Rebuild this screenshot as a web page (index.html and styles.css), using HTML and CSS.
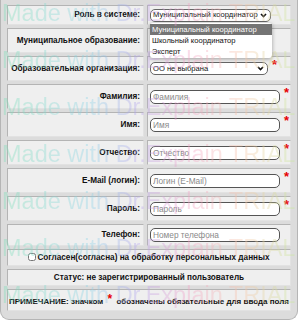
FILE: index.html
```html
<!DOCTYPE html>
<html lang="ru">
<head>
  <meta charset="UTF-8">
  <title>Регистрация</title>
  <link rel="stylesheet" href="styles.css">
</head>
<body>
  <div class="frame">
    <table class="reg">
      <colgroup><col class="c1"><col class="c2"></colgroup>
      <tr class="row-short">
        <td class="lbl">Роль в системе:</td>
        <td class="fld role-cell">
          <div class="field">
            <div class="sel sel-role">Муниципальный координатор
              <svg class="chev" width="7" height="5" viewBox="0 0 7 5"><polyline points="1,1 3.5,3.6 6,1" fill="none" stroke="#111" stroke-width="1.6"/></svg>
            </div>
          </div>
          <ul class="dropdown">
            <li class="active">Муниципальный координатор</li>
            <li>Школьный координатор</li>
            <li>Эксперт</li>
          </ul>
        </td>
      </tr>
      <tr>
        <td class="lbl">Муниципальное образование:</td>
        <td class="fld"></td>
      </tr>
      <tr>
        <td class="lbl">Образовательная организация:</td>
        <td class="fld">
          <div class="field">
            <div class="sel sel-org">ОО не выбрана
              <svg class="chev" width="7" height="5" viewBox="0 0 7 5"><polyline points="1,1 3.5,3.6 6,1" fill="none" stroke="#111" stroke-width="1.6"/></svg>
            </div><span class="req">*</span>
          </div>
        </td>
      </tr>
      <tr>
        <td class="lbl">Фамилия:</td>
        <td class="fld"><div class="field"><input type="text" placeholder="Фамилия"><span class="req">*</span></div></td>
      </tr>
      <tr>
        <td class="lbl">Имя:</td>
        <td class="fld"><div class="field"><input type="text" placeholder="Имя"><span class="req">*</span></div></td>
      </tr>
      <tr>
        <td class="lbl">Отчество:</td>
        <td class="fld"><div class="field"><input type="text" placeholder="Отчество"><span class="req">*</span></div></td>
      </tr>
      <tr>
        <td class="lbl">E-Mail (логин):</td>
        <td class="fld"><div class="field"><input type="text" placeholder="Логин (E-Mail)"><span class="req">*</span></div></td>
      </tr>
      <tr>
        <td class="lbl">Пароль:</td>
        <td class="fld"><div class="field"><input type="password" placeholder="Пароль"><span class="req">*</span></div></td>
      </tr>
      <tr class="row-phone">
        <td class="lbl">Телефон:</td>
        <td class="fld"><div class="field"><input type="text" placeholder="Номер телефона"></div></td>
      </tr>
      <tr class="row-line">
        <td colspan="2" class="center"><label><input type="checkbox" class="chk">Согласен(согласна) на обработку персональных данных</label></td>
      </tr>
      <tr class="row-line">
        <td colspan="2" class="center">Статус: не зарегистрированный пользователь</td>
      </tr>
      <tr class="row-note">
        <td colspan="2" class="center note">ПРИМЕЧАНИЕ: значком <span class="req-inline">*</span> обозначены обязательные для ввода поля</td>
      </tr>
    </table>

    <div class="watermark">
      <div>Made with Dr.Explain TRIAL</div>
      <div>Made with Dr.Explain TRIAL</div>
      <div>Made with Dr.Explain TRIAL</div>
      <div>Made with Dr.Explain TRIAL</div>
      <div>Made with Dr.Explain TRIAL</div>
      <div>Made with Dr.Explain TRIAL</div>
      <div>Made with Dr.Explain TRIAL</div>
    </div>
  </div>
</body>
</html>
```

FILE: styles.css
```css
* {
  box-sizing: border-box;
}
body {
  margin: 0;
  background: #fff;
  font-family: "Liberation Sans", Arial, sans-serif;
  color: #111;
}
.frame {
  position: relative;
  width: 298px;
  height: 320px;
  padding: 2px 3px 0 3px;
  background: #dcdcdc;
  border: 1px solid #b5b5b5;
  border-top: none;
  border-radius: 0 0 9px 9px;
  overflow: hidden;
}
.reg {
  width: 100%;
  table-layout: fixed;
  border-collapse: separate;
  border-spacing: 3px;
}
.c1 {
  width: 137px;
}
.reg td {
  height: 25px;
  padding: 0;
  background: #efefef;
  border: 1px solid;
  border-color: #b4b4b4 #e2e2e2 #e2e2e2 #b4b4b4;
  font-size: 8.2px;
  font-weight: bold;
  line-height: 10px;
  vertical-align: middle;
}
.reg .row-short td {
  height: 20px;
}
.reg .row-phone td {
  height: 22px;
}
.reg .row-line td {
  height: 17px;
}
.reg .row-note td {
  height: 22px;
}
.lbl {
  text-align: right;
  padding-right: 3px !important;
  white-space: nowrap;
}
.fld {
  padding-left: 2px !important;
  font-weight: normal !important;
}
.field {
  display: flex;
  align-items: center;
  height: 14px;
}
.center {
  text-align: center;
  white-space: nowrap;
  overflow: hidden;
}
.note {
  font-size: 8px !important;
}
.role-cell {
  position: relative;
}
.sel {
  display: flex;
  align-items: center;
  justify-content: space-between;
  flex: none;
  height: 13px;
  padding: 0 3px 0 2px;
  border: 1px solid #666;
  border-radius: 5px;
  background: #fff;
  font-size: 7.6px;
  color: #111;
  white-space: nowrap;
}
.sel-role {
  width: 121px;
}
.sel-org {
  width: 118px;
}
.chev {
  display: block;
  flex: none;
}
.dropdown {
  position: absolute;
  left: 2px;
  top: 17px;
  width: 122px;
  margin: 0;
  padding: 1px 0;
  list-style: none;
  background: #fff;
  border-radius: 3px;
  box-shadow: 0 1px 4px rgba(0, 0, 0, 0.35);
  z-index: 2;
  font-size: 7.6px;
  font-weight: normal;
}
.dropdown li {
  height: 11px;
  line-height: 11px;
  padding-left: 2px;
  white-space: nowrap;
}
.dropdown .active {
  background: #747474;
  color: #fff;
}
.fld input[type="text"],
.fld input[type="password"] {
  flex: none;
  width: 130px;
  height: 14px;
  margin: 0;
  padding: 0 2px;
  border: 1.5px solid #555;
  border-radius: 5px;
  background: #fff;
  font-family: "Liberation Sans", Arial, sans-serif;
  font-size: 8.3px;
}
.fld input::placeholder {
  color: #8a8a8a;
}
.req {
  align-self: flex-start;
  margin-left: 4px;
  margin-top: -3px;
  color: #e60000;
  font-size: 13px;
  font-weight: bold;
  line-height: 12px;
}
.req-inline {
  color: #e60000;
  font-size: 12px;
  margin: 0 2px;
  vertical-align: 1px;
}
.chk {
  width: 8px;
  height: 8px;
  margin: 0 1px 0 0;
  vertical-align: -1px;
}
.watermark {
  position: absolute;
  left: 0;
  top: -10px;
  width: 298px;
  pointer-events: none;
  z-index: 3;
  font-family: "Liberation Sans", Arial, sans-serif;
  font-size: 23.5px;
  line-height: 47px;
  white-space: nowrap;
  opacity: 0.38;
}
.watermark div {
  padding-left: 1px;
  background: linear-gradient(90deg, #7fe0b8 0%, #8fd4e8 30%, #b4a4ee 46%, #f2a0c8 62%, #f6c8a8 82%, #c4ec9c 100%);
  -webkit-background-clip: text;
  background-clip: text;
  color: transparent;
}
```
